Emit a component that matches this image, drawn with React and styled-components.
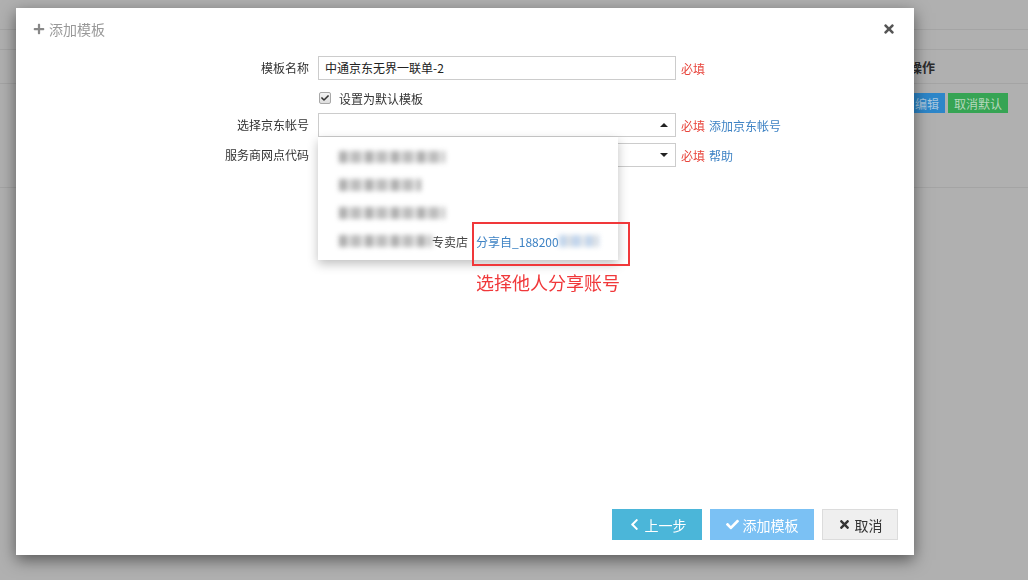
import React from 'react';
import styled, { createGlobalStyle } from 'styled-components';
import { FaChevronLeft, FaCheck, FaTimes, FaPlus } from 'react-icons/fa';

const GlobalStyle = createGlobalStyle`
  html, body {
    margin: 0;
    padding: 0;
    width: 1028px;
    height: 580px;
    overflow: hidden;
    font-family: "Noto Sans CJK SC", "Liberation Sans", sans-serif;
    font-size: 12px;
    color: #333;
  }
  * { box-sizing: border-box; }
`;

// página por trás do fundo escurecido
const Page = styled.div`
  width: 1028px;
  height: 580px;
  background: #b0b0b0;
  display: flex;
  flex-direction: column;
`;

const PageLine = styled.div`
  height: ${(p) => p.$h}px;
  border-bottom: 1px solid #a4a4a4;
  display: flex;
  align-items: ${(p) => p.$align || 'center'};
  justify-content: flex-end;
  padding-right: 20px;
  gap: 3px;
`;

const HeadCell = styled.div`
  width: 99px;
  font-weight: bold;
  font-size: 13px;
  color: #2c2c2c;
`;

const BgButton = styled.span`
  display: inline-flex;
  align-items: center;
  justify-content: center;
  height: 20px;
  padding: 0 6px;
  font-size: 12px;
  background: ${(p) => p.$bg};
  color: ${(p) => p.$color};
  margin-top: 9px;
`;

const Backdrop = styled.div`
  position: fixed;
  inset: 0;
  padding: 8px 0 0 16px;
`;

const Modal = styled.div`
  position: relative;
  width: 898px;
  height: 547px;
  background: #fff;
  box-shadow: 0 5px 15px rgba(0, 0, 0, 0.5);
  display: flex;
  flex-direction: column;
`;

const Header = styled.div`
  height: 42px;
  display: flex;
  align-items: center;
  justify-content: space-between;
  padding: 0 17px 0 17px;
`;

const Title = styled.div`
  display: flex;
  align-items: center;
  gap: 4px;
  color: #999;
  font-size: 14px;
  line-height: 20px;

  svg {
    font-size: 12px;
    color: #888;
  }
`;

const Close = styled.div`
  color: #555;
  font-size: 14px;
  display: flex;
  align-items: center;
  margin-right: 1px;
`;

const Body = styled.div`
  flex: 1;
  padding-top: 6px;
`;

const Row = styled.div`
  display: flex;
  align-items: center;
  margin-bottom: ${(p) => p.$mb || 0}px;
  position: relative;
`;

const Label = styled.div`
  width: 302px;
  text-align: right;
  padding-right: 9px;
  font-size: 12px;
  line-height: 24px;
  color: #333;
`;

const Field = styled.div`
  position: relative;
  width: 358px;
  height: 24px;
`;

const Input = styled.div`
  width: 100%;
  height: 100%;
  border: 1px solid #ccc;
  padding: 0 6px;
  font-size: 12px;
  line-height: 22px;
  color: #222;
  display: flex;
  align-items: center;
  justify-content: space-between;
  background: #fff;
`;

const Caret = styled.span`
  width: 0;
  height: 0;
  border-left: 4px solid transparent;
  border-right: 4px solid transparent;
  ${(p) => (p.$up ? 'border-bottom: 4px solid #222;' : 'border-top: 4px solid #222;')}
  margin-right: 1px;
`;

const Hint = styled.span`
  margin-left: 5px;
  font-size: 12px;
  color: ${(p) => (p.$link ? '#3d82c4' : '#e8453c')};
  & + & { margin-left: 4px; }
`;

const CheckRow = styled.div`
  display: flex;
  align-items: center;
  padding-left: 303px;
  height: 20px;
  margin: 8px 0 5px;
  gap: 8px;
  font-size: 12px;
`;

const CheckBox = styled.span`
  width: 12px;
  height: 12px;
  border: 1px solid #a8a8a8;
  border-radius: 2px;
  background: linear-gradient(#f4f4f4, #dedede);
  display: inline-flex;
  align-items: center;
  justify-content: center;
  svg { font-size: 8px; color: #333; }
`;

const Dropdown = styled.div`
  position: absolute;
  top: 24px;
  left: 0;
  width: 300px;
  background: #fff;
  padding: 6px 0 5px;
  box-shadow: 0 4px 10px rgba(0, 0, 0, 0.25);
  z-index: 2;
`;

const Option = styled.div`
  height: 28px;
  display: flex;
  align-items: center;
  padding-left: 21px;
  font-size: 12px;
  color: #444;
`;

const Blurred = styled.span`
  display: inline-block;
  width: ${(p) => p.$w}px;
  height: 12px;
  filter: blur(2.5px);
  background: repeating-linear-gradient(90deg, ${(p) => p.$color || '#8a8a8a'} 0 8px, #d8d8d8 8px 12px, ${(p) => p.$color || '#a0a0a0'} 12px 22px, #e4e4e4 22px 26px);
  opacity: 0.7;
`;

const Shared = styled.span`
  color: #3d82c4;
  margin-left: 8px;
`;

const Annotation = styled.div`
  position: absolute;
  left: 154px;
  top: 109px;
  width: 158px;
  height: 44px;
  border: 2px solid #f0383a;
  z-index: 3;
`;

const AnnotationText = styled.div`
  position: absolute;
  left: 158px;
  top: 156px;
  color: #f0383a;
  font-size: 18px;
  line-height: 26px;
  white-space: nowrap;
  z-index: 3;
`;

const Footer = styled.div`
  display: flex;
  justify-content: flex-end;
  gap: 8px;
  padding: 0 16px 15px 0;
`;

const Button = styled.div`
  height: 31px;
  width: ${(p) => p.$w}px;
  display: flex;
  align-items: center;
  justify-content: center;
  gap: 4px;
  font-size: 14px;
  background: ${(p) => p.$bg};
  color: ${(p) => p.$color || '#fff'};
  border: 1px solid ${(p) => p.$border || p.$bg};

  svg { font-size: 13px; }
`;

export default function App() {
  return (
    <>
      <GlobalStyle />
      <Page>
        <PageLine $h={30} />
        <PageLine $h={20} />
        <PageLine $h={34}>
          <HeadCell>操作</HeadCell>
        </PageLine>
        <PageLine $h={104} $align="flex-start">
          <BgButton $bg="#2d86c9" $color="#a9c7de">编辑</BgButton>
          <BgButton $bg="#36a454" $color="#b7d8bd">取消默认</BgButton>
        </PageLine>
      </Page>

      <Backdrop>
        <Modal>
          <Header>
            <Title>
              <FaPlus />
              添加模板
            </Title>
            <Close>
              <FaTimes />
            </Close>
          </Header>

          <Body>
            <Row>
              <Label>模板名称</Label>
              <Field>
                <Input>中通京东无界一联单-2</Input>
              </Field>
              <Hint>必填</Hint>
            </Row>

            <CheckRow>
              <CheckBox>
                <FaCheck />
              </CheckBox>
              设置为默认模板
            </CheckRow>

            <Row $mb={6}>
              <Label>选择京东帐号</Label>
              <Field>
                <Input>
                  <span />
                  <Caret $up />
                </Input>
                <Dropdown>
                  <Option><Blurred $w={106} /></Option>
                  <Option><Blurred $w={82} /></Option>
                  <Option><Blurred $w={106} /></Option>
                  <Option>
                    <Blurred $w={93} />
                    专卖店
                    <Shared>分享自_188200</Shared>
                    <Blurred $w={40} $color="#a9c4e4" />
                  </Option>
                </Dropdown>
                <Annotation />
                <AnnotationText>选择他人分享账号</AnnotationText>
              </Field>
              <Hint>必填</Hint>
              <Hint $link>添加京东帐号</Hint>
            </Row>

            <Row>
              <Label>服务商网点代码</Label>
              <Field>
                <Input>
                  <span />
                  <Caret />
                </Input>
              </Field>
              <Hint>必填</Hint>
              <Hint $link>帮助</Hint>
            </Row>
          </Body>

          <Footer>
            <Button $w={90} $bg="#4bb6d9">
              <FaChevronLeft />
              上一步
            </Button>
            <Button $w={104} $bg="#7bc1f4">
              <FaCheck />
              添加模板
            </Button>
            <Button $w={76} $bg="#efefef" $border="#dcdcdc" $color="#333">
              <FaTimes />
              取消
            </Button>
          </Footer>
        </Modal>
      </Backdrop>
    </>
  );
}
